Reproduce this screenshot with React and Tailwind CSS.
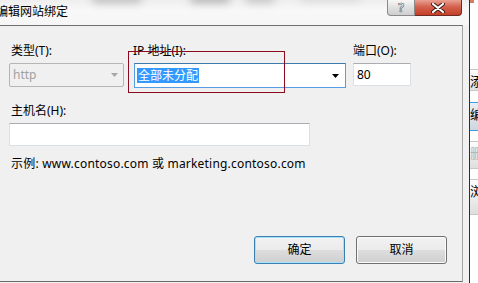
import React from 'react';

const ui = "font-['Noto_Sans','Noto_Sans_CJK_SC',sans-serif] text-[12px] leading-[16px]";

function Caret({ color = '#000' }) {
  return (
    <svg width="7" height="4" viewBox="0 0 7 4">
      <path d="M0 0H7L3.5 4Z" fill={color} />
    </svg>
  );
}

function WinButton({ children, primary }) {
  return (
    <button
      className={
        'w-[91px] h-[28px] rounded-[3px] border text-black ' +
        (primary
          ? 'border-[#3c7fb1] shadow-[inset_0_0_0_1px_#a6e1fb]'
          : 'border-[#707070] shadow-[inset_0_0_0_1px_#fbfbfb]') +
        ' bg-[linear-gradient(#f2f2f2,#ebebeb_50%,#dddddd_51%,#cfcfcf)]'
      }
    >
      {children}
    </button>
  );
}

function StripItem({ text, top, h, muted, active }) {
  return (
    <div
      className={
        'overflow-hidden whitespace-nowrap border-y pl-0 ' +
        (active
          ? 'border-[#3da0e0] bg-[linear-gradient(#e8eef4,#cdd6df)]'
          : 'border-[#c8c8c8] bg-[linear-gradient(#fdfdfd,#dedede)]') +
        (muted ? ' text-[#b5b5b5]' : ' text-black')
      }
      style={{ marginTop: top, height: h }}
    >
      <div className="pt-[3px] text-[13px]">{text}</div>
    </div>
  );
}

export default function App() {
  return (
    <div className={`${ui} w-[478px] h-[283px] flex bg-white overflow-hidden`}>
      {/* dialog window */}
      <div className="w-[469px] shrink-0 flex flex-col bg-[#f1f1f1]">
        {/* title bar */}
        <div className="relative h-[25px] shrink-0 bg-[linear-gradient(#eeeeee,#f8f8f8_40%,#f6f6f6)] overflow-hidden">
          <div className="absolute left-[92px] top-[-6px] w-[50px] h-[9px] rounded-full bg-[#9a9a9a] blur-[4px] opacity-60" />
          <div className="absolute left-[190px] top-[-6px] w-[40px] h-[9px] rounded-full bg-[#8a8a8a] blur-[4px] opacity-60" />
          <div className="absolute left-[245px] top-[-6px] w-[30px] h-[9px] rounded-full bg-[#9a9a9a] blur-[4px] opacity-50" />
          <div className="absolute left-[300px] top-[-8px] w-[60px] h-[9px] rounded-full bg-[#b0b0b0] blur-[5px] opacity-40" />
          <div className="relative flex items-start">
            <span className="ml-[-4px] mt-[3px] text-[12px] text-black font-['Noto_Sans_CJK_SC',sans-serif]">
              编辑网站绑定
            </span>
            <div className="ml-auto mr-[7px] flex">
              <div className="w-[28px] h-[16px] rounded-bl-[4px] border border-t-0 border-[#8a8a8a] bg-[linear-gradient(#f7f7f7,#dedede_55%,#cfcfcf)] flex items-center justify-center text-[12px] font-bold leading-none text-white [-webkit-text-stroke:0.6px_#555]">
                ?
              </div>
              <div className="w-[47px] h-[16px] rounded-br-[4px] border border-t-0 border-l-0 border-[#6d2a22] bg-[linear-gradient(#e8a193,#d4624f_45%,#c43f27)] flex items-center justify-center">
                <svg width="14" height="10" viewBox="0 0 14 10">
                  <path d="M2 1L12 9M12 1L2 9" stroke="#3a1a14" strokeWidth="4" strokeLinecap="round" />
                  <path d="M2 1L12 9M12 1L2 9" stroke="#ffffff" strokeWidth="2.2" strokeLinecap="round" />
                </svg>
              </div>
            </div>
          </div>
        </div>

        {/* client area */}
        <div className="relative w-[463px] h-[257px] shrink-0 border-t border-r border-b border-t-[#6f6f6f] border-r-[#a3a3a3] border-b-[#6a6a6a] bg-[#f0f0f0] flex flex-col pl-[9px] pt-[17px]">
          <div className="flex items-start">
            <div className="w-[115px] flex flex-col">
              <span className="pl-[2px]">类型(T):</span>
              <div className="mt-[4px] h-[24px] rounded-[2px] border border-[#b5b5b5] bg-[#f0f0f0] flex items-center pl-[3px] pr-[5px] text-[#a0a0a0]">
                <span>http</span>
                <span className="ml-auto"><Caret color="#a6a6a6" /></span>
              </div>
            </div>
            <div className="ml-[10px] w-[212px] flex flex-col">
              <span className="ml-[-1px]">IP 地址(I):</span>
              <div className="mt-[4px] h-[25px] border border-[#569de5] border-t-[#3d7bad] bg-white flex items-center pl-[2px] pr-[6px]">
                <span className="bg-[#3399ff] text-white px-[1px] leading-[15px]">全部未分配</span>
                <span className="ml-auto"><Caret /></span>
              </div>
            </div>
            <div className="ml-[7px] w-[58px] flex flex-col">
              <span>端口(O):</span>
              <div className="mt-[4px] h-[23px] border border-[#dbdfe6] border-t-[#abadb3] bg-white flex items-center pl-[3px]">
                80
              </div>
            </div>
          </div>

          <span className="mt-[15px] pl-[2px]">主机名(H):</span>
          <div className="mt-[4px] w-[301px] h-[23px] border border-[#dbdfe6] border-t-[#abadb3] bg-white" />

          <span className="mt-[10px] pl-[2px] tracking-[0.2px]">示例: www.contoso.com 或 marketing.contoso.com</span>

          <div className="mt-auto mb-[17px] mr-[15px] flex justify-end gap-[11px]">
            <WinButton primary>确定</WinButton>
            <WinButton>取消</WinButton>
          </div>

          {/* annotation box */}
          <div className="absolute left-[128px] top-[25px] w-[157px] h-[42px] border border-[#8b0a1e]" />
        </div>
      </div>

      {/* window edge */}
      <div className="w-[1px] shrink-0 bg-[#2e2e2e]" />

      {/* action strip behind the dialog */}
      <div className="flex-1 flex flex-col bg-white overflow-hidden">
        <div className="h-[3px] w-[4px] bg-[#d08060]" />
        <StripItem text="添加..." top={66} h={22} />
        <StripItem text="编辑..." top={11} h={29} active />
        <StripItem text="删除" top={10} h={28} muted />
        <StripItem text="浏览" top={10} h={36} />
      </div>
    </div>
  );
}
